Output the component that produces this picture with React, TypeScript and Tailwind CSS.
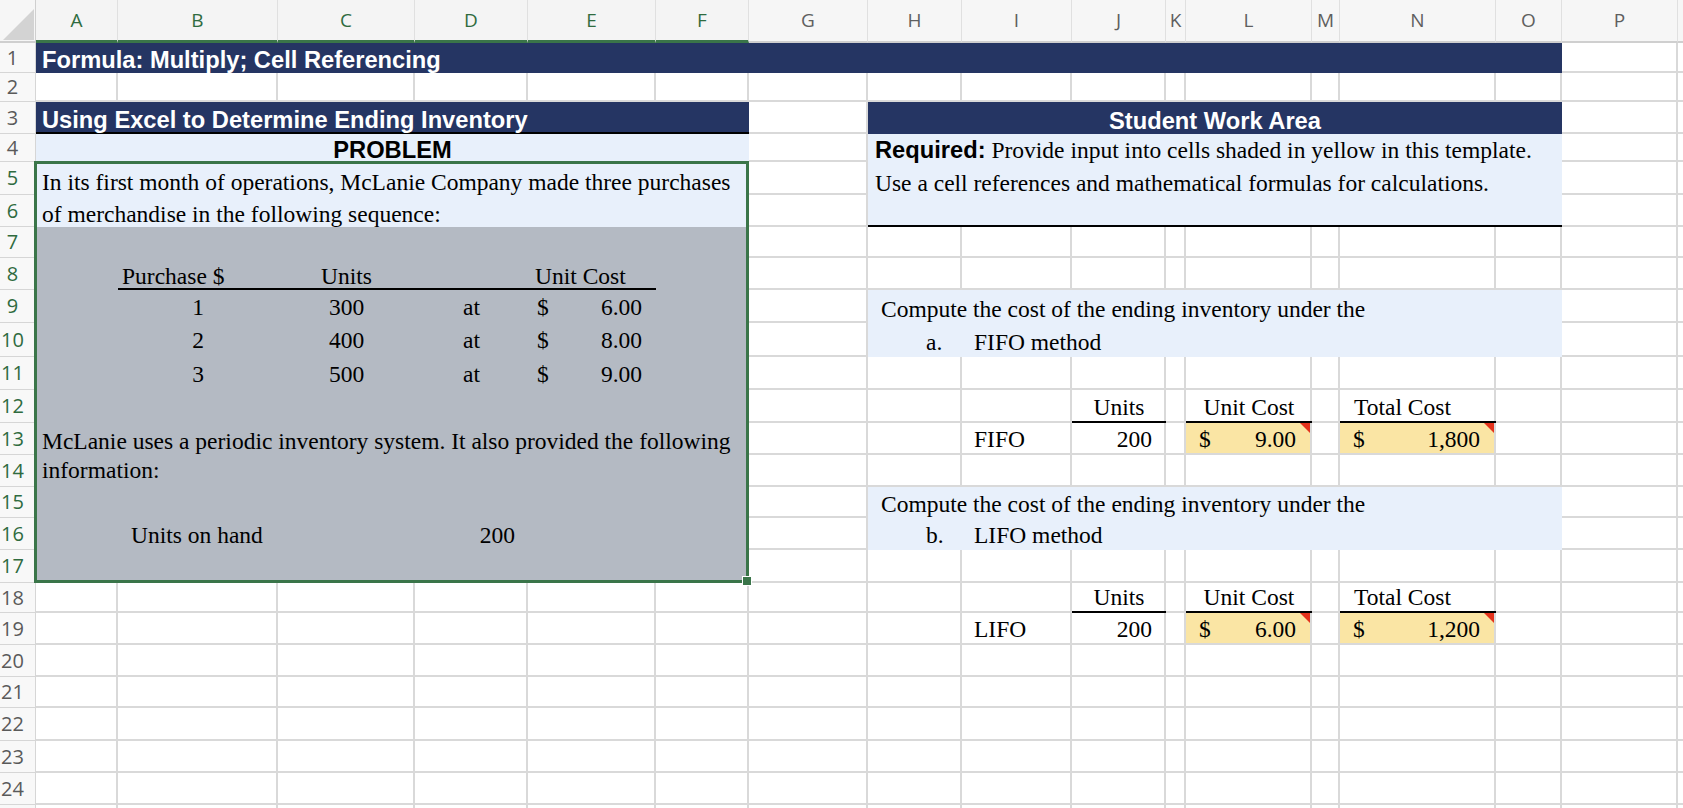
import React from "react";

const cols = ["A", "B", "C", "D", "E", "F", "G", "H", "I", "J", "K", "L", "M", "N", "O", "P"];
const selCols = ["A", "B", "C", "D", "E", "F"];
const rowNums = Array.from({ length: 24 }, (_, i) => i + 1);

const GRID =
  "grid w-[1683px] h-[808px] grid-cols-[36px_82px_160px_137px_113px_128px_93px_119px_94px_110px_94px_20px_126px_28px_156px_66px_116px_1fr] grid-rows-[43px_30px_29px_32px_28px_33px_32px_31px_32px_33px_34px_33px_33px_32px_32px_31px_32px_33px_30px_32px_32px_31px_33px_32px_32px_1fr]";

const serif = "font-['Liberation_Serif','Times_New_Roman',serif] text-[23.5px] leading-[23px] text-black whitespace-nowrap";
const bold = "font-['Liberation_Sans',Arial,sans-serif] font-bold text-[23.7px] leading-[23px] whitespace-nowrap";

// plain text cell, bottom aligned like excel
function T({ className, children }: { className: string; children?: React.ReactNode }) {
  return <div className={`flex items-end ${serif} ${className}`}>{children}</div>;
}

// accounting format cell ($ left, number right)
function Money({ className, value }: { className: string; value: string }) {
  return (
    <div className={`flex items-end justify-between pr-[14px] ${serif} ${className}`}>
      <span>$</span>
      <span>{value}</span>
    </div>
  );
}

function Flag() {
  return (
    <svg className="absolute top-0 right-0" width="10" height="10" viewBox="0 0 10 10">
      <polygon points="0,0 10,0 10,10" fill="#e4321c" />
    </svg>
  );
}

function Gridlines() {
  return (
    <div className={`${GRID} col-start-1 row-start-1`}>
      {/* column header row */}
      <div className="bg-[#f6f6f6] border-r border-b-2 border-[#cfcfcf] flex items-end">
        <svg width="34" height="34" viewBox="0 0 34 34" className="ml-[1px]">
          <polygon points="2,33 33,33 33,2" fill="#d3d3d3" />
        </svg>
      </div>
      {cols.map((c) => (
        <div
          key={c}
          className={
            selCols.includes(c)
              ? "flex items-center justify-center bg-[#f4f4f4] border-r border-[#e0e0e0] border-b-[3px] border-b-[#3a7549] text-[#2f6b3f] font-['Open_Sans',sans-serif] text-[19px]"
              : "flex items-center justify-center bg-[#f6f6f6] border-r border-[#e0e0e0] border-b-2 border-b-[#cfcfcf] text-[#5f5f5f] font-['Open_Sans',sans-serif] text-[19px]"
          }
        >
          {c}
        </div>
      ))}
      <div className="bg-[#f6f6f6] border-b-2 border-[#cfcfcf]" />

      {/* body rows */}
      {rowNums.map((r) => (
        <React.Fragment key={r}>
          <div
            className={
              r >= 5 && r <= 17
                ? "flex items-center justify-center pr-[10px] bg-[#f8f8f8] border-r border-b border-[#d6d6d6] text-[#2f6b3f] font-['Open_Sans',sans-serif] text-[20px]"
                : "flex items-center justify-center pr-[10px] bg-[#f8f8f8] border-r border-b border-[#d6d6d6] text-[#5a5a5a] font-['Open_Sans',sans-serif] text-[20px]"
            }
          >
            {r}
          </div>
          {cols.map((c) => (
            <div key={c} className="border-r-2 border-b-2 border-[#d9d9d9]" />
          ))}
          <div className="border-b-2 border-[#d9d9d9]" />
        </React.Fragment>
      ))}
      <div className="bg-[#f8f8f8] border-r border-[#d6d6d6]" />
      {cols.map((c) => (
        <div key={c} className="border-r-2 border-[#d9d9d9]" />
      ))}
      <div />
    </div>
  );
}

export default function App() {
  return (
    <div className="grid w-[1683px] h-[808px] overflow-hidden bg-white">
      <Gridlines />

      <div className={`${GRID} col-start-1 row-start-1`}>
        {/* row 1 title */}
        <div className={`col-start-2 col-span-15 row-start-2 bg-[#253563] text-white flex items-end pl-[6px] pb-[1px] ${bold}`}>
          Formula: Multiply; Cell Referencing
        </div>

        {/* row 3 */}
        <div className={`col-start-2 col-span-6 row-start-4 bg-[#253563] border-b-2 border-black text-white flex items-end pl-[6px] pb-0 ${bold}`}>
          Using Excel to Determine Ending Inventory
        </div>
        <div className={`col-start-9 col-span-8 row-start-4 bg-[#253563] text-white flex items-end justify-center pb-[1px] ${bold}`}>
          Student Work Area
        </div>

        {/* problem block */}
        <div className={`col-start-2 col-span-6 row-start-5 bg-[#e8f0fb] text-black flex items-end justify-center pb-0 ${bold}`}>
          PROBLEM
        </div>
        <div className="col-start-2 col-span-6 row-start-6 row-span-2 bg-[#e8f0fb]" />
        <div className="col-start-2 col-span-6 row-start-8 row-span-11 bg-[#b4bac3]" />

        <T className="col-start-2 col-span-6 row-start-6 pl-[6px] pb-[1px]">
          In its first month of operations, McLanie Company made three purchases
        </T>
        <T className="col-start-2 col-span-6 row-start-7 pl-[6px] pb-[1px]">of merchandise in the following sequence:</T>

        <div className="col-start-3 col-span-4 row-start-9 border-b-2 border-black" />
        <T className="col-start-3 row-start-9 pl-[4px] pb-[2px]">Purchase $</T>
        <T className="col-start-4 row-start-9 justify-center pb-[2px]">Units</T>
        <T className="col-start-6 row-start-9 pl-[7px] pb-[2px]">Unit Cost</T>

        <T className="col-start-3 row-start-10 justify-center pb-[4px]">1</T>
        <T className="col-start-4 row-start-10 justify-center pb-[4px]">300</T>
        <T className="col-start-5 row-start-10 justify-center pb-[4px]">at</T>
        <Money className="col-start-6 row-start-10 pl-[9px] pb-[4px]" value="6.00" />

        <T className="col-start-3 row-start-11 justify-center pb-[5px]">2</T>
        <T className="col-start-4 row-start-11 justify-center pb-[5px]">400</T>
        <T className="col-start-5 row-start-11 justify-center pb-[5px]">at</T>
        <Money className="col-start-6 row-start-11 pl-[9px] pb-[5px]" value="8.00" />

        <T className="col-start-3 row-start-12 justify-center pb-[4px]">3</T>
        <T className="col-start-4 row-start-12 justify-center pb-[4px]">500</T>
        <T className="col-start-5 row-start-12 justify-center pb-[4px]">at</T>
        <Money className="col-start-6 row-start-12 pl-[9px] pb-[4px]" value="9.00" />

        <T className="col-start-2 col-span-6 row-start-14 pl-[6px] pb-[2px]">
          McLanie uses a periodic inventory system. It also provided the following
        </T>
        <T className="col-start-2 col-span-6 row-start-15 pl-[6px] pb-[5px]">information:</T>

        <T className="col-start-3 row-start-17 pl-[13px] pb-[3px]">Units on hand</T>
        <T className="col-start-5 row-start-17 justify-end pr-[13px] pb-[3px]">200</T>

        {/* selection box A5:F17 */}
        <div className="relative col-start-2 col-span-6 row-start-6 row-span-13 -ml-[2px] -mt-[1px] border-[3px] border-[#3a7549] pointer-events-none">
          <div className="absolute -right-[6px] -bottom-[6px] w-[10px] h-[10px] bg-[#3a7549] border border-white" />
        </div>

        {/* student work area */}
        <div className="col-start-9 col-span-8 row-start-5 row-span-3 bg-[#e8f0fb] border-b-2 border-black" />
        <div className="col-start-9 col-span-8 row-start-5 flex items-end pl-[7px] whitespace-nowrap">
          <span className={`${bold} text-black`}>Required:</span>
          <span className={serif}>&nbsp;Provide input into cells shaded in yellow in this template.</span>
        </div>
        <T className="col-start-9 col-span-8 row-start-6 pl-[7px] pb-0">
          Use a cell references and mathematical formulas for calculations.
        </T>

        {/* FIFO */}
        <div className="col-start-9 col-span-8 row-start-10 row-span-2 bg-[#e8f0fb]" />
        <T className="col-start-9 col-span-8 row-start-10 pl-[13px] pb-[2px]">
          Compute the cost of the ending inventory under the
        </T>
        <T className="col-start-9 row-start-11 pl-[58px] pb-[3px]">a.</T>
        <T className="col-start-10 col-span-4 row-start-11 pl-[12px] pb-[3px]">FIFO method</T>

        <T className="col-start-11 row-start-13 justify-center pb-[2px] border-b-2 border-black">Units</T>
        <T className="col-start-13 row-start-13 justify-center pb-[2px] border-b-2 border-black">Unit Cost</T>
        <T className="col-start-15 row-start-13 pl-[14px] pb-[2px] border-b-2 border-black">Total Cost</T>

        <T className="col-start-10 row-start-14 pl-[12px] pb-[4px]">FIFO</T>
        <T className="col-start-11 row-start-14 justify-end pr-[14px] pb-[4px]">200</T>
        <div className="relative col-start-13 row-start-14 bg-[#fae5a4] mr-[2px] mb-[2px]">
          <Money className="h-full pl-[13px] pb-[2px]" value="9.00" />
          <Flag />
        </div>
        <div className="relative col-start-15 row-start-14 bg-[#fae5a4] mr-[2px] mb-[2px]">
          <Money className="h-full pl-[13px] pb-[2px]" value="1,800" />
          <Flag />
        </div>

        {/* LIFO */}
        <div className="col-start-9 col-span-8 row-start-16 row-span-2 bg-[#e8f0fb]" />
        <T className="col-start-9 col-span-8 row-start-16 pl-[13px] pb-[2px]">
          Compute the cost of the ending inventory under the
        </T>
        <T className="col-start-9 row-start-17 pl-[58px] pb-[3px]">b.</T>
        <T className="col-start-10 col-span-4 row-start-17 pl-[12px] pb-[3px]">LIFO method</T>

        <T className="col-start-11 row-start-19 justify-center pb-[2px] border-b-2 border-black">Units</T>
        <T className="col-start-13 row-start-19 justify-center pb-[2px] border-b-2 border-black">Unit Cost</T>
        <T className="col-start-15 row-start-19 pl-[14px] pb-[2px] border-b-2 border-black">Total Cost</T>

        <T className="col-start-10 row-start-20 pl-[12px] pb-[4px]">LIFO</T>
        <T className="col-start-11 row-start-20 justify-end pr-[14px] pb-[4px]">200</T>
        <div className="relative col-start-13 row-start-20 bg-[#fae5a4] mr-[2px] mb-[2px]">
          <Money className="h-full pl-[13px] pb-[2px]" value="6.00" />
          <Flag />
        </div>
        <div className="relative col-start-15 row-start-20 bg-[#fae5a4] mr-[2px] mb-[2px]">
          <Money className="h-full pl-[13px] pb-[2px]" value="1,200" />
          <Flag />
        </div>
      </div>
    </div>
  );
}
